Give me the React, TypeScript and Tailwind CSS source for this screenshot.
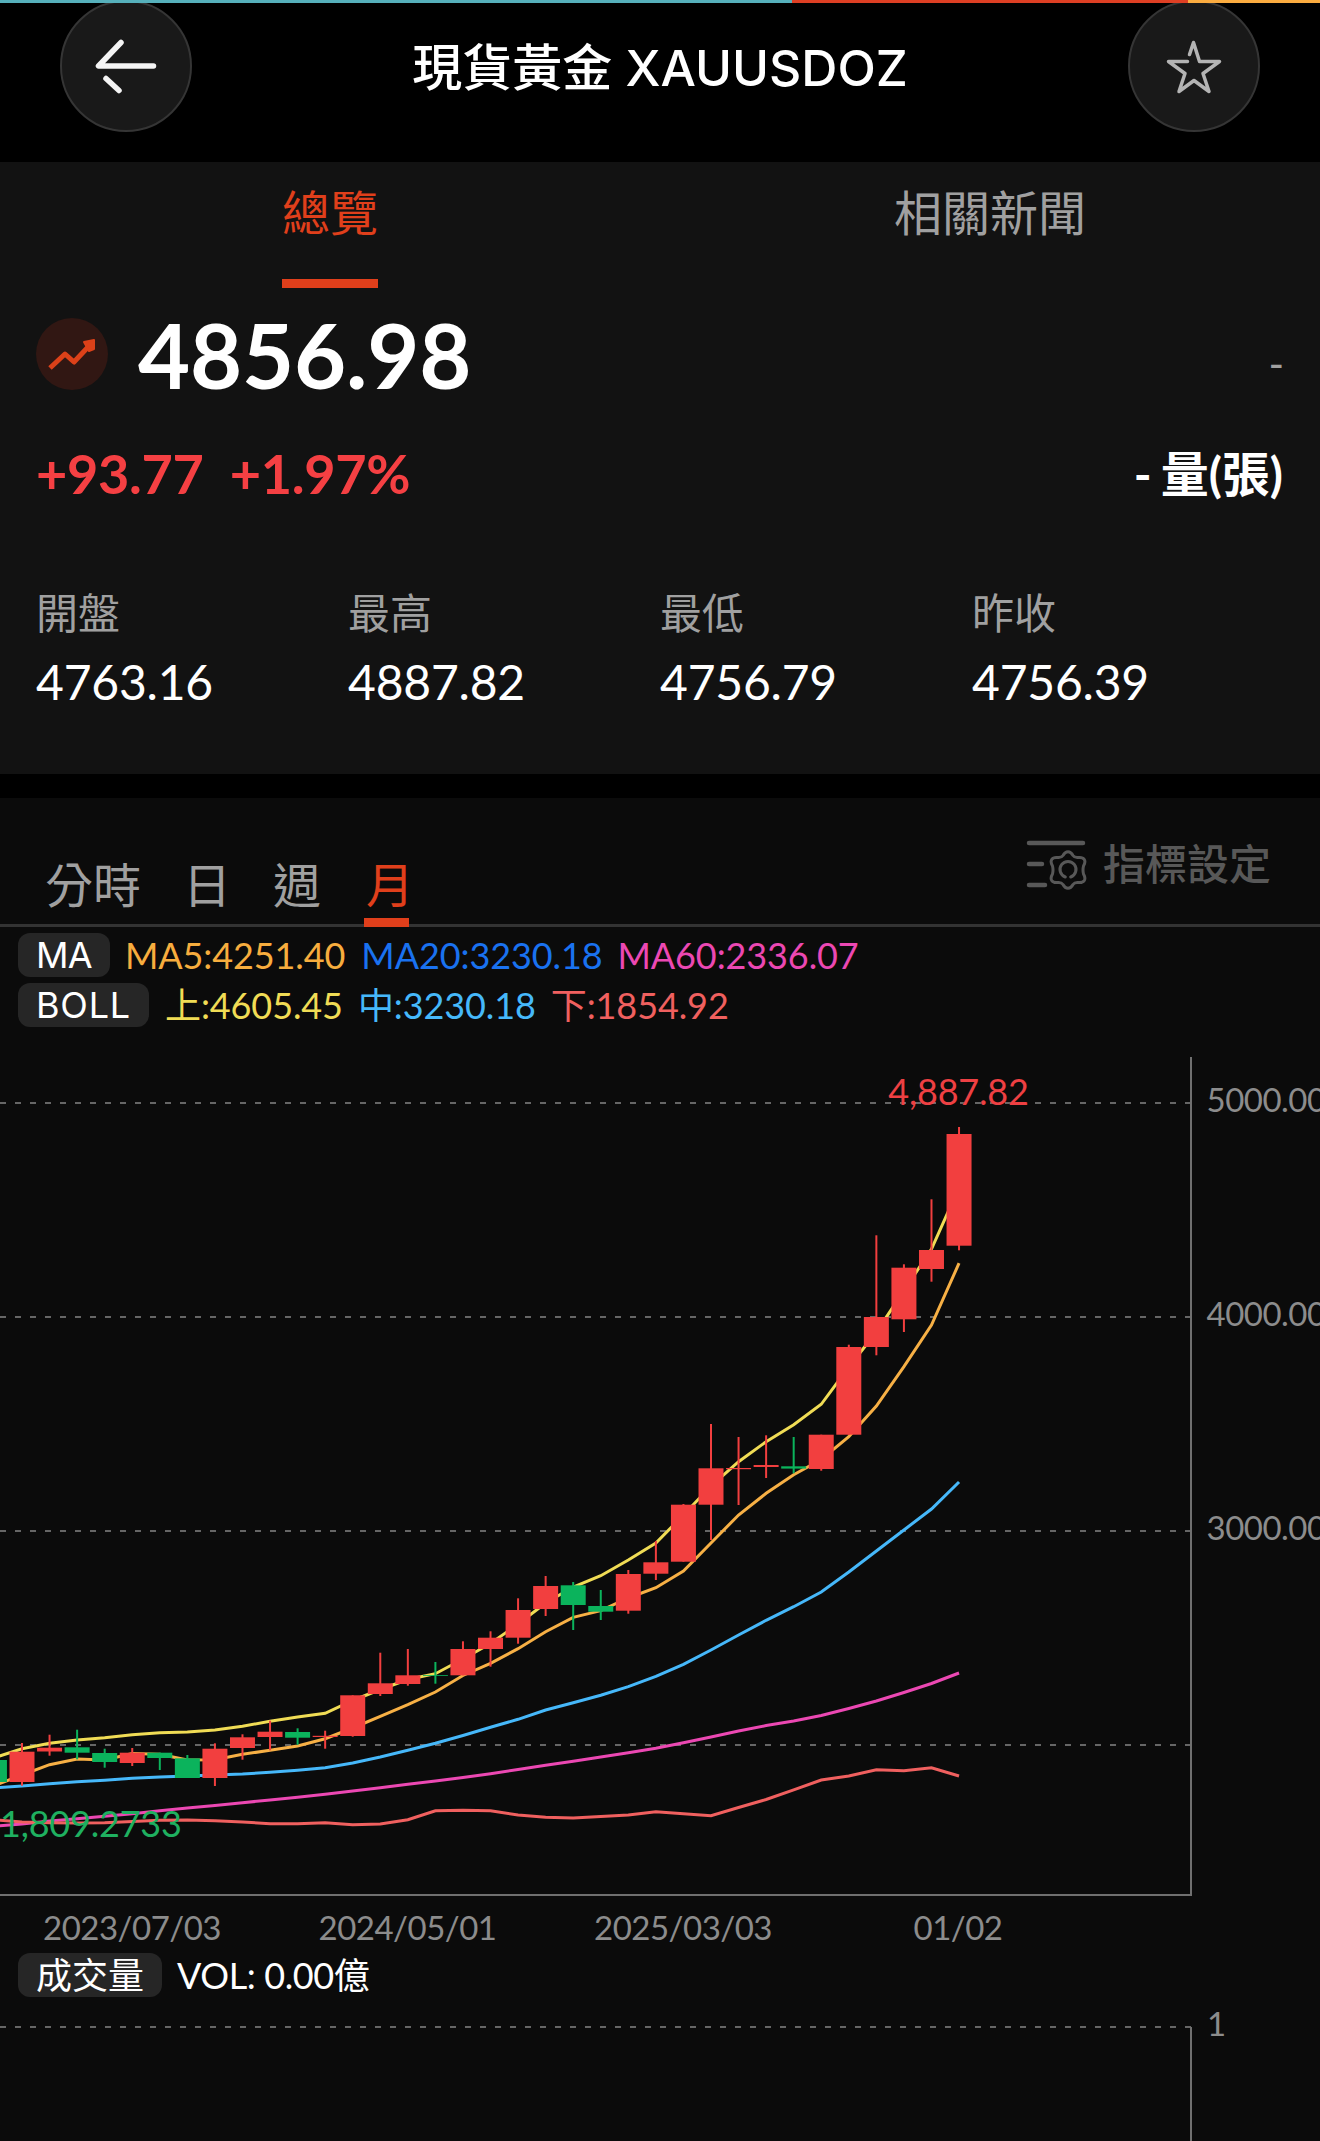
import clsx from "clsx";

type Candle = {
  open: number;
  close: number;
  high: number;
  low: number;
  up: boolean;
};

const UP = "#f23f3f";
const DOWN = "#0bb35c";

const STEP = 27.56;
const FIRST_X = 22;

const xAt = (i: number) => FIRST_X + i * STEP;

// [body top, body bottom, wick top, wick bottom, rising]
const rows: [number, number, number, number, boolean][] = [
  [1760, 1782, 1758, 1784, false],
  [1751.7, 1782, 1743, 1785.7, true],
  [1747.7, 1751.5, 1734.7, 1755.7, true],
  [1747.3, 1752.7, 1729.7, 1759.3, false],
  [1753, 1762, 1748.7, 1767.7, false],
  [1752.7, 1763, 1748, 1766, true],
  [1752.7, 1758, 1752.7, 1770, false],
  [1758.3, 1778, 1755, 1778, false],
  [1748.7, 1778, 1743.3, 1786, true],
  [1737.3, 1748, 1734.3, 1759.7, true],
  [1731.7, 1737, 1720.7, 1750.3, true],
  [1732, 1737.7, 1728.3, 1744.7, false],
  [1735.8, 1737, 1730.7, 1748.7, true],
  [1695.3, 1736, 1695.3, 1736.7, true],
  [1683.3, 1694, 1652.7, 1696, true],
  [1675.3, 1684, 1649, 1685.7, true],
  [1675.2, 1676, 1662, 1683.7, false],
  [1649, 1675.3, 1641.3, 1675.3, true],
  [1637.7, 1649, 1631.3, 1666.7, true],
  [1610, 1637.7, 1598.3, 1643.7, true],
  [1586, 1609, 1576, 1616, true],
  [1585.3, 1605, 1582, 1630, false],
  [1606, 1611.7, 1590, 1620, false],
  [1574, 1610.7, 1570, 1613.7, true],
  [1562.3, 1573.7, 1541, 1580, true],
  [1504.7, 1561.7, 1504, 1561.7, true],
  [1468.3, 1504.7, 1424, 1540, true],
  [1468, 1469.2, 1437, 1505, true],
  [1465, 1467, 1435.3, 1478, true],
  [1466.3, 1468.6, 1437, 1473.3, false],
  [1434.7, 1469, 1434.7, 1470.7, true],
  [1347, 1434.7, 1344.7, 1434.7, true],
  [1317, 1347, 1235.3, 1355.3, true],
  [1267.7, 1319.3, 1264.3, 1332, true],
  [1250, 1269, 1199.3, 1281.7, true],
  [1134, 1245.7, 1127, 1250.3, true],
];

const candles: Candle[] = rows.map(([open, close, high, low, up]) => ({ open, close, high, low, up }));

const upper = [
  1757.7, 1748.7, 1743.3, 1740, 1737.7, 1734.7, 1732.7, 1732, 1730, 1726.3, 1721.3, 1717, 1713.3, 1700.5,
  1689.5, 1679.5, 1673.7, 1659, 1643.5, 1624, 1603, 1587, 1575.7, 1560, 1543, 1515, 1486, 1461.7, 1441.7,
  1424.7, 1404.3, 1367, 1332, 1290.7, 1249, 1187.4,
];

const ma5 = [
  1785.5, 1775, 1764.7, 1759, 1760, 1753.5, 1754.3, 1760, 1759.7, 1754.3, 1750.3, 1746, 1738.7, 1728, 1716.3,
  1704.7, 1692, 1675.5, 1663.3, 1648.7, 1631.7, 1617.3, 1610.7, 1598, 1587.7, 1571, 1543, 1515, 1493.3,
  1474.7, 1459.5, 1436.7, 1406, 1366.7, 1325, 1263.2,
];

const ma20 = [
  1788, 1786, 1783.7, 1781.7, 1780.3, 1778.3, 1777, 1776, 1775, 1774, 1772.3, 1770.3, 1767.7, 1763, 1757,
  1750.3, 1743.3, 1735.5, 1727.3, 1719.3, 1710, 1702.7, 1695.3, 1686.7, 1676.3, 1664.3, 1650, 1635, 1620.3,
  1606.7, 1592, 1572, 1551, 1530, 1509, 1482,
];

const ma60 = [
  1826.3, 1824, 1821, 1818.7, 1816.3, 1813.7, 1810.7, 1808, 1805.5, 1802.7, 1800, 1797.3, 1794.3, 1791,
  1787.7, 1784.3, 1781, 1777.5, 1773.7, 1769.5, 1765.3, 1761.2, 1757, 1752.8, 1748.3, 1742.7, 1737, 1731,
  1725.6, 1721, 1715.5, 1708.5, 1701, 1692.5, 1683.5, 1673,
];

const lower = [
  1819.8, 1822, 1822.7, 1823, 1822.7, 1821.5, 1820.3, 1820, 1820.7, 1822, 1823.7, 1823.7, 1822.7, 1824.7,
  1824, 1819.7, 1810.7, 1810.3, 1810.7, 1815, 1817.3, 1818, 1816.5, 1815, 1811.7, 1813.7, 1815.7, 1807.5,
  1799.5, 1789.8, 1780, 1776, 1769.8, 1770.8, 1767.7, 1776,
];

const lines = [
  { key: "upper", color: "#f0dc55", data: upper },
  { key: "ma60", color: "#ec48b3", data: ma60 },
  { key: "ma20", color: "#46b8fa", data: ma20 },
  { key: "ma5", color: "#f7b045", data: ma5 },
  { key: "lower", color: "#f0605f", data: lower },
];

const stats = [
  { label: "開盤", value: "4763.16" },
  { label: "最高", value: "4887.82" },
  { label: "最低", value: "4756.79" },
  { label: "昨收", value: "4756.39" },
];

const periods = [
  { label: "分時", active: false },
  { label: "日", active: false },
  { label: "週", active: false },
  { label: "月", active: true },
];

const toPoints = (data: number[]) => data.map((y, i) => `${xAt(i - 1)},${y}`).join(" ");

function Header() {
  return (
    <header className="flex h-[159px] items-start justify-between bg-black px-[60px]">
      <button className="-mt-[3px] flex size-[132px] items-center justify-center rounded-full border-2 border-[#353535] bg-[#191919]">
        <svg width="64" height="64" viewBox="0 0 64 64" fill="none" stroke="#f4f4f4" strokeWidth="5.5" strokeLinecap="round" strokeLinejoin="round">
          <path d="M27 8.5L4.5 32H59.5" />
          <path d="M12 44.5L25 56.5" />
        </svg>
      </button>
      <h1 className="mt-[27px] text-[50px] leading-[76px] font-medium whitespace-pre text-white [font-family:Inter,'Noto_Sans_CJK_TC',sans-serif]">
        現貨黃金 XAUUSDOZ
      </h1>
      <button className="-mt-[3px] flex size-[132px] items-center justify-center rounded-full border-2 border-[#353535] bg-[#191919]">
        <svg width="60" height="60" viewBox="0 0 60 60" fill="none" stroke="#b4b4b4" strokeWidth="3.5" strokeLinejoin="round" strokeLinecap="round">
          <path d="M23.5 25.5H4.5L21 37.5L15 55.5L30 44.5L45 55.5L39 37.5L55.5 25.5H35.5L29.5 6.5L25.5 18.5" />
        </svg>
      </button>
    </header>
  );
}

function Quote() {
  return (
    <section className="h-[612px] bg-[#121212]">
      <div className="grid h-[126px] grid-cols-2 text-[48px] leading-[72px]">
        <div className="flex flex-col items-center">
          <span className="mt-[15px] text-[#e03f1b]">總覽</span>
          <span className="mt-[30px] h-[9px] w-24 bg-[#e03f1b]" />
        </div>
        <div className="flex flex-col items-center">
          <span className="mt-[15px] text-[#a0a0a0]">相關新聞</span>
        </div>
      </div>

      <div className="flex h-[132px] items-center justify-between px-9">
        <div className="flex items-center">
          <span className="flex size-[72px] items-center justify-center rounded-full bg-[#311713]">
            <svg width="48" height="34" viewBox="0 0 48 34" fill="none" stroke="#dc4119" strokeWidth="5">
              <path d="M2 31L17 17L26 25L41 9" strokeLinejoin="round" />
              <path d="M36 5L46 3L46 12L41 14Z" fill="#dc4119" strokeWidth="2" strokeLinejoin="round" />
            </svg>
          </span>
          <span className="ml-[30px] text-[90px] leading-[132px] font-bold tracking-[-0.2px] text-white">4856.98</span>
        </div>
        <span className="mt-[18px] text-[42px] leading-none text-[#a0a0a0]">-</span>
      </div>

      <div className="flex h-[108px] items-center justify-between px-9">
        <div className="flex gap-[26px] text-[54px] leading-none font-bold tracking-[-0.3px] text-[#f54043]">
          <span>+93.77</span>
          <span>+1.97%</span>
        </div>
        <div className="flex gap-[9px] pr-px text-[48px] leading-none font-bold text-white">
          <span>-</span>
          <span>量(張)</span>
        </div>
      </div>

      <div className="mt-[55px] grid grid-cols-4 px-9">
        {stats.map((s) => (
          <div key={s.label}>
            <p className="text-[42px] leading-[60px] text-[#a0a0a0]">{s.label}</p>
            <p className="mt-[3px] text-[48px] leading-[72px] tracking-[-0.2px] text-white">{s.value}</p>
          </div>
        ))}
      </div>
    </section>
  );
}

function SettingIcon() {
  return (
    <svg width="62" height="56" viewBox="0 0 62 56" fill="none" stroke="#585858" strokeLinecap="round" strokeLinejoin="round">
      <path d="M4 7H58M4 28H17M4 49H20" strokeWidth="4.5" />
      <path
        d="M0 -18.3Q3 -18.3 5 -14.5Q6.5 -12.3 9.5 -12.4Q14.5 -13.3 16.3 -10.5Q17.8 -8 15.5 -4Q14.5 0 15.5 4Q17.8 8 16.3 10.5Q14.5 13.3 9.5 12.4Q6.5 12.3 5 14.5Q3 18.3 0 18.3Q-3 18.3 -5 14.5Q-6.5 12.3 -9.5 12.4Q-14.5 13.3 -16.3 10.5Q-17.8 8 -15.5 4Q-14.5 0 -15.5 -4Q-17.8 -8 -16.3 -10.5Q-14.5 -13.3 -9.5 -12.4Q-6.5 -12.3 -5 -14.5Q-3 -18.3 0 -18.3Z"
        transform="translate(43 34)"
        strokeWidth="3"
      />
      <path d="M40.3 41A8 8 0 1 1 45.7 41" strokeWidth="3" />
    </svg>
  );
}

function PeriodBar() {
  return (
    <div className="flex h-[129px] items-end justify-between border-b-[3px] border-[#333333] pr-[49px] pl-[45px]">
      <div className="-mb-[3px] flex gap-[42px] text-[48px] leading-[66px]">
        {periods.map((p) => (
          <div key={p.label} className="flex flex-col items-center">
            <span className={clsx(p.active ? "pl-[3px] text-[#e03f1b]" : "text-[#a0a0a0]")}>{p.label}</span>
            <span className={clsx("h-[9px] w-[45px]", p.active && "mr-[4px] bg-[#e03f1b]")} />
          </div>
        ))}
      </div>
      <div className="mb-[30px] flex items-center gap-[16px] text-[42px] leading-[60px] font-medium text-[#585858]">
        <SettingIcon />
        <span>指標設定</span>
      </div>
    </div>
  );
}

function Chip({ children, className }: { children: string; className?: string }) {
  return (
    <span
      className={clsx(
        "flex h-11 items-center rounded-[12px] bg-[#262626] px-[18px] text-[36px] leading-[44px] text-white [font-family:Inter,'Noto_Sans_CJK_TC',sans-serif]",
        className
      )}
    >
      {children}
    </span>
  );
}

function Legend() {
  return (
    <div className="flex flex-col gap-[6px] px-[18px] pt-[6px] text-[36px] leading-[44px] tracking-[-0.1px]">
      <div className="flex h-11 items-center">
        <Chip className="tracking-[-0.7px]">MA</Chip>
        <span className="ml-[15px] text-[#f7ad3e]">MA5:4251.40</span>
        <span className="ml-[16px] text-[#1a72f0]">MA20:3230.18</span>
        <span className="ml-[15px] text-[#ec48b3]">MA60:2336.07</span>
      </div>
      <div className="flex h-11 items-center">
        <Chip className="tracking-[0.8px]">BOLL</Chip>
        <span className="ml-[16px] text-[#f0dc55]">上:4605.45</span>
        <span className="ml-[15px] text-[#46b8fa]">中:3230.18</span>
        <span className="ml-[15px] text-[#f0605f]">下:1854.92</span>
      </div>
    </div>
  );
}

function PriceChart() {
  return (
    <svg width="1320" height="906" viewBox="0 1047 1320 906" className="mt-5 block">
      {[1103, 1317, 1531, 1745].map((y) => (
        <line key={y} x1="0" x2="1191" y1={y} y2={y} stroke="#666666" strokeWidth="2" strokeDasharray="6 9" />
      ))}
      <path d="M1191 1057V1895H0" fill="none" stroke="#707070" strokeWidth="2" />

      {lines.map((l) => (
        <polyline key={l.key} points={toPoints(l.data)} fill="none" stroke={l.color} strokeWidth="3" />
      ))}

      {candles.map((c, i) => {
        const x = xAt(i - 1);
        const color = c.up ? UP : DOWN;
        return (
          <g key={i} fill={color}>
            <rect x={x - 1} y={c.high} width="2" height={c.low - c.high} />
            <rect x={x - 12.5} y={c.open} width="25" height={c.close - c.open} />
          </g>
        );
      })}

      <text x="958.5" y="1104.5" textAnchor="middle" fill="#ee4043" className="text-[36px] tracking-[-0.2px]">4,887.82</text>
      <text x="0" y="1837" fill="#1fb060" className="text-[36px] tracking-[-0.2px]">1,809.2733</text>

      <g fill="#8c8c8c" className="text-[33px] tracking-[-0.5px]">
        <text x="1206.5" y="1112">5000.00</text>
        <text x="1206.5" y="1326">4000.00</text>
        <text x="1206.5" y="1540">3000.00</text>
        <g textAnchor="middle">
          <text x="132" y="1940">2023/07/03</text>
          <text x="407.5" y="1940">2024/05/01</text>
          <text x="683" y="1940">2025/03/03</text>
          <text x="958" y="1940">01/02</text>
        </g>
      </g>
    </svg>
  );
}

function Volume() {
  return (
    <>
      <div className="flex h-11 items-center px-[18px] text-[36px] leading-[44px] text-white">
        <Chip className="pt-px">成交量</Chip>
        <span className="ml-[15px] tracking-[-0.4px]">VOL: 0.00億</span>
      </div>
      <svg width="1320" height="144" viewBox="0 1997 1320 144" className="block">
        <line x1="0" x2="1191" y1="2027" y2="2027" stroke="#666666" strokeWidth="2" strokeDasharray="6 9" />
        <line x1="1191" x2="1191" y1="2027" y2="2141" stroke="#707070" strokeWidth="2" />
        <text x="1207" y="2036" fill="#8c8c8c" className="text-[33px]">1</text>
      </svg>
    </>
  );
}

export default function App() {
  return (
    <main className="h-[2141px] w-[1320px] overflow-hidden bg-[#0b0b0b] [font-family:Lato,'Noto_Sans_CJK_TC',sans-serif]">
      <div className="relative z-10 flex h-[3px]">
        <span className="w-[60%] bg-[#56b0bb]" />
        <span className="w-[30%] bg-[#de3f24]" />
        <span className="w-[10%] bg-[#fbac40]" />
      </div>
      <Header />
      <Quote />
      <div className="h-6 bg-black" />
      <PeriodBar />
      <Legend />
      <PriceChart />
      <Volume />
    </main>
  );
}
